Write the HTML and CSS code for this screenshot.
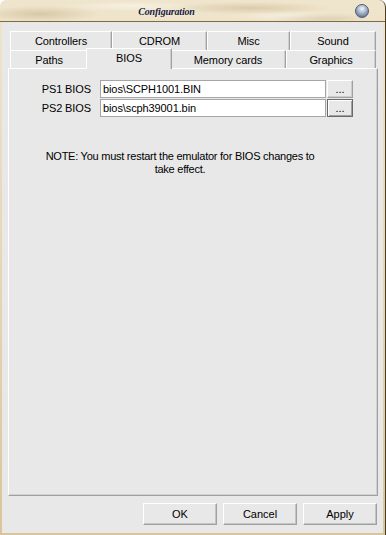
FILE: index.html
```html
<!DOCTYPE html>
<html lang="en">
  <head>
    <meta charset="utf-8">
    <title>Configuration</title>
    <link rel="stylesheet" href="styles.css">
  </head>
  <body>
    <div class='window'>
        <div class='titlebar'>
            <span class='title'>Configuration</span>
            <span class='orb'></span>
        </div>
        <div class='client'>
            <div class='tabs'>
                <div class='tabrow'>
                    <div class='tab t-controllers'>Controllers</div>
                    <div class='tab t-cdrom'>CDROM</div>
                    <div class='tab t-misc'>Misc</div>
                    <div class='tab t-sound'>Sound</div>
                </div>
                <div class='tabrow low'>
                    <div class='tab t-paths'>Paths</div>
                    <div class='tab t-bios selected'>BIOS</div>
                    <div class='tab t-memcards'>Memory cards</div>
                    <div class='tab t-graphics'>Graphics</div>
                </div>
                <div class='panel'>
                    <div class='biosgrid'>
                        <label class='biosname'>PS1 BIOS</label>
                        <input class='biospath' type='text' value='bios\SCPH1001.BIN'>
                        <button class='browse'>...</button>
                        <label class='biosname'>PS2 BIOS</label>
                        <input class='biospath' type='text' value='bios\scph39001.bin'>
                        <button class='browse focus'>...</button>
                    </div>
                    <p class='note'>NOTE: You must restart the emulator for BIOS changes to<br>take effect.</p>
                </div>
            </div>
            <div class='buttons'>
                <button class='dlgbtn'>OK</button>
                <button class='dlgbtn'>Cancel</button>
                <button class='dlgbtn'>Apply</button>
            </div>
        </div>
    </div>
  </body>
</html>
```

FILE: styles.css
```css
* {
    box-sizing: border-box;
}
body, html {
    height: 100%;
    overflow: hidden;
}
body {
    margin: 0;
    padding: 0;
    background: #ffffff;
    color: #000;
    font: 11px/13px 'Liberation Sans', Arial, sans-serif;
    letter-spacing: -0.1px;
}
.window {
    width: 386px;
    height: 535px;
    border-radius: 6px 7px 0 0;
    border-right: 1px solid #4b3c22;
    background:
        radial-gradient(ellipse 60px 8px at 40px 14px, rgba(170,145,100,0.35), transparent),
        radial-gradient(ellipse 70px 5px at 130px 6px, rgba(255,255,255,0.45), transparent),
        radial-gradient(ellipse 80px 6px at 250px 8px, rgba(180,155,110,0.35), transparent),
        radial-gradient(ellipse 60px 5px at 290px 16px, rgba(255,255,255,0.4), transparent),
        radial-gradient(ellipse 50px 5px at 320px 18px, rgba(170,145,100,0.3), transparent),
        linear-gradient(180deg, #efe5cc 0%, #e4d5b4 55%, #d8c59c 100%);
    display: flex;
    flex-direction: column;
}
.titlebar {
    height: 22px;
    border-bottom: 1px solid #7d6a45;
    display: flex;
    align-items: center;
}
.title {
    flex: 1;
    text-align: center;
    padding-top: 1px;
    font: italic bold 10px 'Liberation Serif', serif;
    letter-spacing: -0.2px;
    color: #16183c;
    text-shadow: 0 0 2px #fff8e8;
}
.orb {
    width: 14px;
    height: 14px;
    margin: 0 16px 0 22px;
    border-radius: 50%;
    border: 1px solid #4c5a72;
    background: radial-gradient(circle at 50% 32%, #f2f6fb 0%, #b5c2d4 35%, #6f819d 75%, #4d5d78 100%);
}
.client {
    flex: 1;
    margin: 0 2px 2px 2px;
    background: #e8e8e8;
    padding: 9px 0 8px 0;
    display: flex;
    flex-direction: column;
}
.tabs {
    margin: 0 5px 0 6px;
}
.tabrow {
    display: flex;
    align-items: flex-start;
    padding-left: 2px;
    height: 19px;
}
.tabrow.low {
    height: 18px;
}
.tab {
    height: 19px;
    background: #e8e8e8;
    border-top: 1px solid #ffffff;
    border-left: 1px solid #ffffff;
    border-right: 1px solid #a0a0a0;
    box-shadow: inset -1px 0 #cfcfcf;
    text-align: center;
    padding-top: 1px;
    line-height: 17px;
}
.low .tab {
    height: 18px;
}
.t-controllers { width: 102px; }
.t-cdrom { width: 95px; }
.t-misc { width: 83px; }
.t-sound { width: 86px; }
.t-paths { width: 78px; }
.t-memcards { width: 116px; }
.t-graphics { width: 90px; }
.low .tab.selected {
    width: 86px;
    height: 21px;
    margin: -2px -2px -1px -2px;
    z-index: 1;
}
.panel {
    height: 428px;
    border-top: 1px solid #ffffff;
    border-left: 1px solid #ffffff;
    border-right: 1px solid #a0a0a0;
    border-bottom: 1px solid #a0a0a0;
    box-shadow: inset -1px -1px #d0d0d0;
    padding-top: 11px;
}
.biosgrid {
    display: grid;
    grid-template-columns: 91px 226px 27px;
    grid-auto-rows: 18px;
    row-gap: 1px;
    align-items: center;
}
.biosname {
    text-align: right;
    padding-right: 9px;
    padding-top: 1px;
}
.biospath {
    width: 226px;
    height: 18px;
    margin: 0;
    border: 1px solid #a6a6a6;
    background: #ffffff;
    padding: 0 2px;
    font: 11px 'Liberation Sans', Arial, sans-serif;
    letter-spacing: -0.1px;
    color: #000;
}
.browse {
    justify-self: end;
    width: 26px;
    height: 18px;
    margin: 0;
    padding: 0;
    background: #e8e8e8;
    border-top: 1px solid #ffffff;
    border-left: 1px solid #ffffff;
    border-right: 1px solid #a0a0a0;
    border-bottom: 1px solid #a0a0a0;
    box-shadow: inset -1px -1px #cccccc;
    font: 11px/14px 'Liberation Sans', Arial, sans-serif;
    color: #000;
}
.browse.focus {
    border: 1px solid #6a6a6a;
    box-shadow: inset 1px 1px #ffffff, inset -1px -1px #a0a0a0;
}
.note {
    margin: 33px 0 0 23px;
    width: 296px;
    text-align: center;
    letter-spacing: -0.25px;
}
.buttons {
    margin-top: 7px;
    padding-right: 6px;
    display: flex;
    justify-content: flex-end;
    gap: 6px;
}
.dlgbtn {
    width: 74px;
    height: 22px;
    margin: 0;
    padding: 0;
    background: #e8e8e8;
    border-top: 1px solid #ffffff;
    border-left: 1px solid #ffffff;
    border-right: 1px solid #a0a0a0;
    border-bottom: 1px solid #a0a0a0;
    box-shadow: inset -1px -1px #c4c4c4;
    font: 11px 'Liberation Sans', Arial, sans-serif;
    color: #000;
}
```
